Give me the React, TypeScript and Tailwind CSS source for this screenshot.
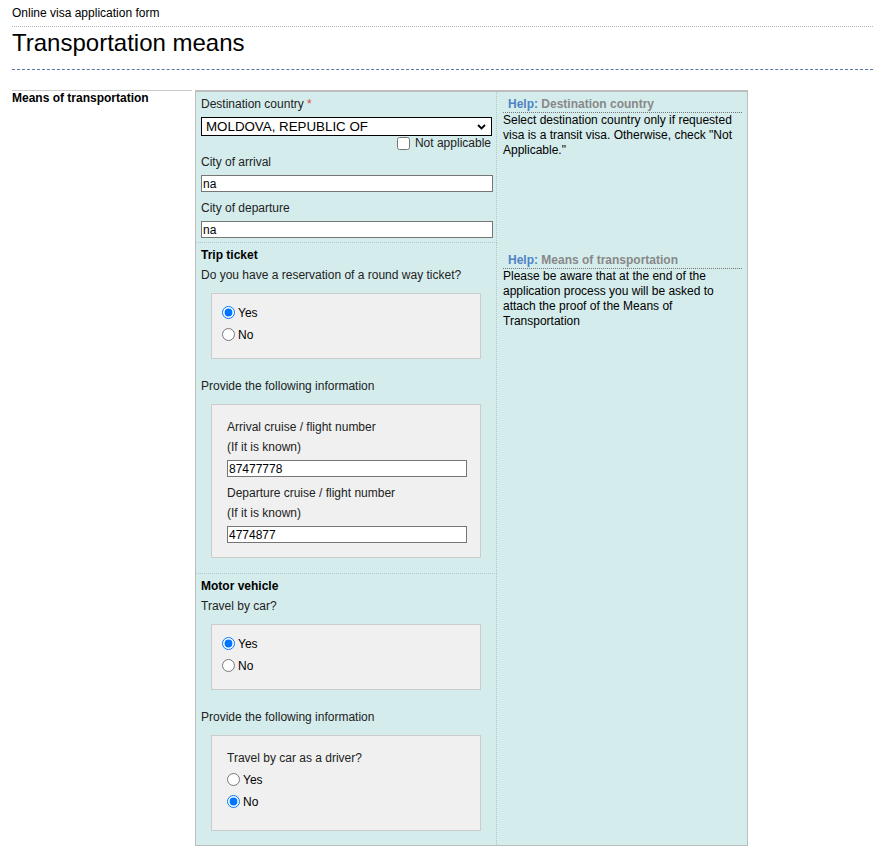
import type { ReactNode } from "react";

type RadioProps = { name: string; label: string; checked?: boolean };

const Radio = ({ name, label, checked }: RadioProps) => (
  <label className="flex h-[22px] items-center gap-[3px]">
    <input type="radio" name={name} defaultChecked={checked} className="m-0 h-[13px] w-[13px]" />
    <span className="pt-[1px]">{label}</span>
  </label>
);

// single line label, 20px row, glyphs nudged 1px down to match the original rendering
const Label = ({ children, className = "" }: { children: ReactNode; className?: string }) => (
  <div className={`h-[20px] pt-[1px] leading-[20px] text-[#222] ${className}`}>{children}</div>
);

const TextField = ({ value, className = "" }: { value: string; className?: string }) => (
  <input
    type="text"
    defaultValue={value}
    className={`block h-[17px] border border-[#767676] bg-white px-[1px] text-[12px] leading-[15px] text-black outline-none ${className}`}
  />
);

const GrayBox = ({ children, className = "" }: { children: ReactNode; className?: string }) => (
  <div className={`ml-[10px] mr-[15px] border border-[#cccccc] bg-[#f0f0f0] ${className}`}>{children}</div>
);

const Help = ({ title, children }: { title: string; children: ReactNode }) => (
  <div>
    <div className="border-b border-dotted border-[#777] pl-[5px] font-bold leading-[15px]">
      <span className="text-[#4f83c4]">Help:</span> <span className="text-[#888]">{title}</span>
    </div>
    <p className="leading-[15px] text-black">{children}</p>
  </div>
);

export default function App() {
  return (
    <div className="min-h-screen bg-white pb-4 pl-3 pr-[2px] font-['Liberation_Sans',Arial,sans-serif] text-[12px] text-black">
      <div className="border-b border-dotted border-[#b5b5b5] pb-[5px] pt-[6px] leading-[15px]">
        Online visa application form
      </div>
      <h1 className="border-b border-dashed border-[#5877a8] pb-[12px] pt-[2px] text-[24px] leading-[28px] text-black">
        Transportation means
      </h1>

      <div className="mt-[20px] flex items-start">
        <div className="mr-[3px] w-[180px] border-t border-[#cccccc] font-bold leading-[14px]">
          Means of transportation
        </div>

        <div className="grid w-[553px] grid-cols-[301px_1fr] border border-t-2 border-[#bdbdbd] bg-[#d5ecec]">
          {/* destination */}
          <div className="border-b border-r border-dotted border-[#b3c4c4] pb-[4px] pl-[5px] pr-[3px] pt-[1px]">
            <Label>
              Destination country <span className="text-[#e0483a]">*</span>
            </Label>
            <div className="mr-[1px] mt-[4px] flex h-[19px] items-center border border-black bg-white pl-[4px] pr-[5px]">
              <select
                defaultValue="MD"
                className="flex-1 appearance-none bg-transparent text-[13.33px] leading-[17px] text-black outline-none"
              >
                <option value="MD">MOLDOVA, REPUBLIC OF</option>
              </select>
              <svg width="9" height="6" viewBox="0 0 9 6" className="shrink-0">
                <path d="M1 1l3.5 3.5L8 1" fill="none" stroke="#000" strokeWidth="1.8" />
              </svg>
            </div>
            <label className="flex h-[14px] items-center justify-end gap-[5px] pr-[2px] text-[#222]">
              <input type="checkbox" className="m-0 h-[13px] w-[13px]" />
              Not applicable
            </label>
            <Label className="mt-[1px]">City of arrival</Label>
            <TextField value="na" className="mt-[4px] w-[292px]" />
            <Label className="mt-[5px]">City of departure</Label>
            <TextField value="na" className="mt-[4px] w-[292px]" />
          </div>
          <div className="pl-[6px] pr-[5px] pt-[5px]">
            <Help title="Destination country">
              Select destination country only if requested visa is a transit visa. Otherwise, check "Not Applicable."
            </Help>
          </div>

          {/* trip ticket */}
          <div className="border-b border-r border-dotted border-[#b3c4c4] pb-[15px] pl-[5px] pt-[1px]">
            <Label className="font-bold text-black">Trip ticket</Label>
            <Label>Do you have a reservation of a round way ticket?</Label>
            <GrayBox className="mt-[9px] pb-[13px] pl-[10px] pt-[7px]">
              <Radio name="ticket" label="Yes" checked />
              <Radio name="ticket" label="No" />
            </GrayBox>
            <Label className="mt-[16px]">Provide the following information</Label>
            <GrayBox className="mt-[9px] pb-[14px] pl-[15px] pt-[11px]">
              <Label>Arrival cruise / flight number</Label>
              <Label>(If it is known)</Label>
              <TextField value="87477778" className="mt-[4px] w-[240px]" />
              <Label className="mt-[5px]">Departure cruise / flight number</Label>
              <Label>(If it is known)</Label>
              <TextField value="4774877" className="mt-[4px] w-[240px]" />
            </GrayBox>
          </div>
          <div className="pl-[6px] pr-[5px] pt-[10px]">
            <Help title="Means of transportation">
              Please be aware that at the end of the application process you will be asked to attach the proof of the
              Means of Transportation
            </Help>
          </div>

          {/* motor vehicle */}
          <div className="border-r border-dotted border-[#b3c4c4] pb-[14px] pl-[5px] pt-[1px]">
            <Label className="font-bold text-black">Motor vehicle</Label>
            <Label>Travel by car?</Label>
            <GrayBox className="mt-[9px] pb-[13px] pl-[10px] pt-[7px]">
              <Radio name="car" label="Yes" checked />
              <Radio name="car" label="No" />
            </GrayBox>
            <Label className="mt-[16px]">Provide the following information</Label>
            <GrayBox className="mt-[9px] pb-[18px] pl-[15px] pt-[11px]">
              <Label>Travel by car as a driver?</Label>
              <div className="mt-[1px]">
                <Radio name="driver" label="Yes" />
                <Radio name="driver" label="No" checked />
              </div>
            </GrayBox>
          </div>
          <div />
        </div>
      </div>
    </div>
  );
}
